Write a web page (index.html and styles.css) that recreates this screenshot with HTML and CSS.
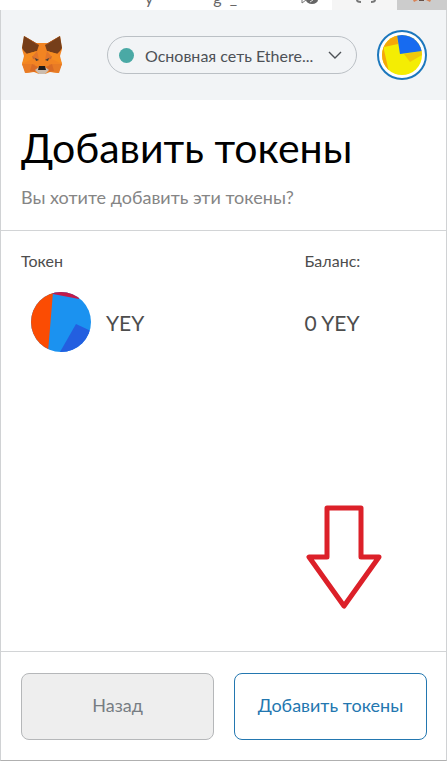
FILE: index.html
```html
<!DOCTYPE html>
<html lang="ru">
<head>
<meta charset="utf-8">
<meta name="viewport" content="width=device-width, initial-scale=1">
<title>Добавить токены</title>
<link rel="stylesheet" href="styles.css">
</head>
<body>
<div class="toolbar" aria-hidden="true">
  <div class="toolbar-text"><span>y</span><span>g&nbsp; _</span></div>
  <svg class="toolbar-icon" width="20" height="10" viewBox="0 0 20 10"><path d="M2 0v3l4-3" fill="none" stroke="#777"/><path d="M6 0a6 4 0 0 0 12 0z" fill="#666"/><path d="M10 2l3-2" stroke="#ddd"/></svg>
  <div class="tab"><svg width="20" height="10" viewBox="0 0 20 10"><path d="M1 0q0 2 4 2M19 0q0 2-4 2" fill="none" stroke="#777" stroke-width="2"/></svg></div>
  <div class="tab tab-active"><svg width="20" height="10" viewBox="0 0 20 10"><path d="M1 0h5l-4 2zM14 0h5l-1 2z" fill="#d98254"/><path d="M7 0h5v1H7z" fill="#665048"/></svg></div>
</div>
<div class="popup">
  <header class="header">
    <svg class="fox" width="42" height="40" viewBox="0 0 42 40" role="img" aria-label="MetaMask">
      <path d="M3 1l12 7h12l12-7 2 13-2 7 2 8-4 9-8-1-5 2h-6l-5-2-8 1-4-9 2-8-2-7z" fill="#f28422"/>
      <path d="M3 1l15 9-2 6-10 3-3-3-2-3z" fill="#763e1a"/>
      <path d="M39 1l-15 9 2 6 10 3 3-3 2-3z" fill="#763e1a"/>
      <path d="M3 1l12 7 3 3zM39 1L27 8l-3 3z" fill="#a7521f"/>
      <path d="M5 19l11-3-1 6-14 7zM37 19l-11-3 1 6 14 7z" fill="#f58c20"/>
      <path d="M1 29h13l-3 8-7 1zM41 29H28l3 8 7 1z" fill="#e87b25"/>
      <path d="M16 16l-5 6 7 3-1-5zM26 16l5 6-7 3 1-5z" fill="#e2762b"/>
      <path d="M11 21l7 4-6-1zM31 21l-7 4 6-1z" fill="#c86a32"/>
      <path d="M14 23l4 2-3 1zM28 23l-4 2 3 1z" fill="#443c38"/>
      <path d="M11 29l6 3-3 5-5-1zM31 29l-6 3 3 5 5-1z" fill="#d96b25"/>
      <path d="M14 35l4-3h6l4 3-4 4h-6z" fill="#cbbcae"/>
      <path d="M18 31h6l1 4h-8z" fill="#211c1a"/>
    </svg>
    <button class="network" type="button">
      <span class="dot"></span><span class="network-name">Основная сеть Ethere...</span>
      <svg width="14" height="8" viewBox="0 0 14 8"><path d="M1 1l6 6 6-6" fill="none" stroke="#4d5156" stroke-width="1.4"/></svg>
    </button>
    <button class="account" type="button" aria-label="Аккаунт">
      <svg width="40" height="40" viewBox="0 0 40 40"><defs><clipPath id="account-clip"><circle cx="20" cy="20" r="20"/></clipPath></defs><g clip-path="url(#account-clip)"><path d="M0 0h40v40H0z" fill="#f4ed03"/><path d="M0 0h15l1 9L2 12v3l5 22L0 40z" fill="#f5a70a"/><path d="M22 19l18-3v4l-12 7z" fill="#efc80b"/><path d="M15 0h25v16l-22 3z" fill="#176bf0"/></g></svg>
    </button>
  </header>
  <section class="intro">
    <h1>Добавить токены</h1>
    <p>Вы хотите добавить эти токены?</p>
  </section>
  <main class="content">
    <table>
      <thead><tr><th>Токен</th><th class="balance">Баланс:</th></tr></thead>
      <tbody><tr>
        <td><div class="token"><svg width="60" height="60" viewBox="0 0 60 60" aria-hidden="true"><defs><clipPath id="token-clip"><circle cx="30" cy="30" r="30"/></clipPath></defs><g clip-path="url(#token-clip)"><path d="M0 0h60v60H0z" fill="#1b92f0"/><path d="M0 0h22l-5 60H0z" fill="#fb4c03"/><path d="M20 0h28v7L22 2z" fill="#c21b4a"/><path d="M45 32l15 7v21H29z" fill="#235fe0"/></g></svg><span>YEY</span></div></td>
        <td>0 YEY</td>
      </tr></tbody>
    </table>
    <svg class="arrow" width="76" height="106" viewBox="0 0 76 106" aria-hidden="true"><path d="M21 4h34v49h18L38 102 3 53h18z" fill="none" stroke="#dc2029" stroke-width="5" stroke-linejoin="round"/></svg>
  </main>
  <footer class="footer">
    <button class="btn back" type="button">Назад</button>
    <button class="btn add" type="button">Добавить токены</button>
  </footer>
</div>
</body>
</html>
```
FILE: styles.css
```css
* { box-sizing: border-box; }
body {
  margin: 0;
  min-height: 100vh;
  display: flex;
  flex-direction: column;
  background: #fff;
  color: #4d4d4d;
  font-family: Lato, "Noto Sans", sans-serif;
}
button { font: inherit; cursor: pointer; }
svg { display: block; flex: none; }
.toolbar {
  display: flex;
  height: 10px;
  overflow: hidden;
  color: #666;
}
.toolbar-text {
  flex: 1;
  display: flex;
  align-items: flex-end;
  gap: 60px;
  padding: 0 0 5px 145px;
  font-size: 16px;
  line-height: 14px;
}
.toolbar-icon { margin-right: 12px; }
.tab { width: 65px; padding-left: 24px; background: #f5f5f5; }
.tab-active { width: 50px; padding-left: 15px; background: #ccc; }
.popup {
  flex: 1;
  display: flex;
  flex-direction: column;
  border: 1px solid #d0d2d4;
  border-top: 0;
  border-bottom-color: #b0b0b0;
}
.header {
  display: flex;
  align-items: center;
  height: 90px;
  padding: 0 19px 0 20px;
  background: #f2f4f6;
}
.network {
  display: flex;
  align-items: center;
  width: 250px;
  height: 38px;
  margin: 0 20px 0 auto;
  padding: 0 14px 0 11px;
  border: 1px solid #bbc0c5;
  border-radius: 19px;
  background: transparent;
  color: #4d5156;
  font-size: 16px;
}
.dot { width: 15px; height: 15px; border-radius: 50%; background: #4aa9a5; }
.network-name { flex: 1; margin-left: 11px; text-align: left; white-space: nowrap; }
.account {
  display: grid;
  place-items: center;
  width: 50px;
  height: 50px;
  padding: 0;
  border: 2px solid #1d78bd;
  border-radius: 50%;
  background: #fff;
}
.intro { padding: 23px 20px 21px; border-bottom: 1px solid #d2d4d6; }
h1 { margin: 0; color: #000; font-size: 41px; font-weight: 400; line-height: 50px; }
p { margin: 12px 0 0; color: #858585; font-size: 18px; line-height: 24px; }
.content { flex: 1; display: flex; flex-direction: column; padding: 19px 20px; }
table { width: 100%; border-collapse: collapse; table-layout: fixed; }
th, td { padding: 0; text-align: left; font-weight: 400; }
th { font-size: 16px; line-height: 22px; }
.balance { width: 30%; }
td { padding-top: 20px; font-size: 21px; }
.token { display: flex; align-items: center; gap: 15px; padding-left: 10px; }
.arrow { margin: auto 44px 22px auto; }
.footer {
  display: flex;
  gap: 20px;
  padding: 21px 19px 20px 20px;
  border-top: 1px solid #d2d4d6;
}
.btn { flex: 1; height: 67px; padding: 0 0 3px; border: 1px solid; border-radius: 8px; font-size: 18px; }
.back { background: #eee; border-color: #b5b7b9; color: #777d83; }
.add { background: #fff; border-color: #2377b0; color: #2377b0; }
```
